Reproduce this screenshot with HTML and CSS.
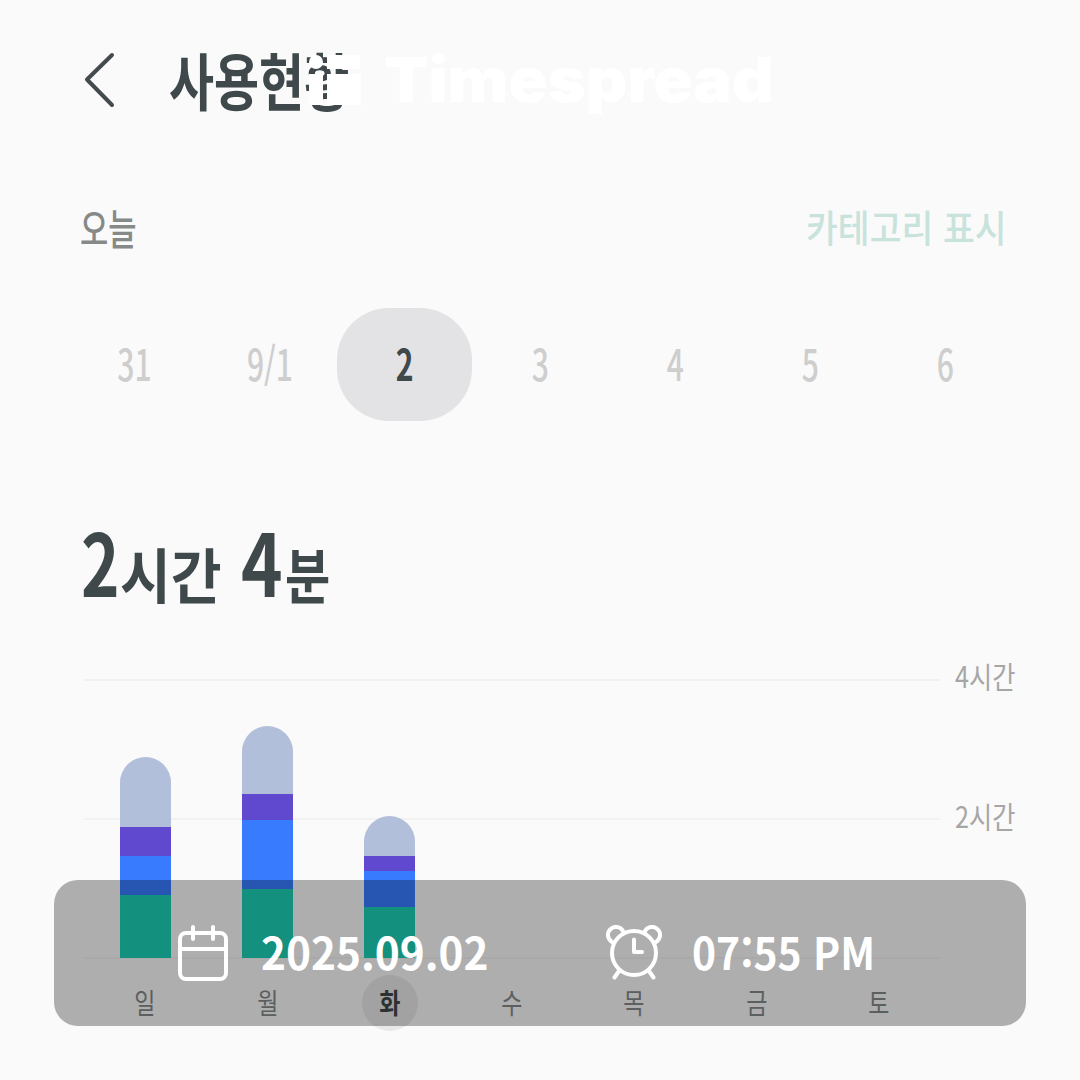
FILE: index.html
```html
<!DOCTYPE html>
<html lang="ko">
<head>
<meta charset="utf-8">
<title>사용현황</title>
<link rel="stylesheet" href="styles.css">
</head>
<body>
<main class="screen">
  <header class="header">
    <svg class="back" viewBox="0 0 32 56"><path d="M29 3 4 27.500 29 53"/></svg>
    <h1 class="title"><span>사용현황</span></h1>
  </header>
  <div class="filter">
    <div class="today"><span>오늘</span></div>
    <div class="category"><span>카테고리 표시</span></div>
  </div>
  <nav class="week">
    <div class="date"><span>31</span></div>
    <div class="date"><span>9/1</span></div>
    <div class="date selected"><span>2</span></div>
    <div class="date"><span>3</span></div>
    <div class="date"><span>4</span></div>
    <div class="date"><span>5</span></div>
    <div class="date"><span>6</span></div>
  </nav>
  <div class="total">
    <div class="num hours"><span>2</span></div>
    <div class="unit hour-unit"><span>시간</span></div>
    <div class="num minutes"><span>4</span></div>
    <div class="unit minute-unit"><span>분</span></div>
  </div>
  <section class="chart">
    <div class="plot">
      <div class="column"><div class="bar"><i class="other" style="height:70px"></i><i class="purple" style="height:29.500px"></i><i class="blue" style="height:38.500px"></i><i class="green" style="height:63.500px"></i></div></div>
      <div class="column"><div class="bar"><i class="other" style="height:67.500px"></i><i class="purple" style="height:26.500px"></i><i class="blue" style="height:68.500px"></i><i class="green" style="height:69.500px"></i></div></div>
      <div class="column"><div class="bar"><i class="other" style="height:40px"></i><i class="purple" style="height:15px"></i><i class="blue" style="height:35.500px"></i><i class="green" style="height:51.500px"></i></div></div>
    </div>
    <div class="scale">
      <div class="tick"><span>4시간</span></div>
      <div class="tick"><span>2시간</span></div>
    </div>
  </section>
  <div class="days">
    <div class="day"><span>일</span></div>
    <div class="day"><span>월</span></div>
    <div class="day active"><span>화</span></div>
    <div class="day"><span>수</span></div>
    <div class="day"><span>목</span></div>
    <div class="day"><span>금</span></div>
    <div class="day"><span>토</span></div>
  </div>
  <div class="brand">
    <svg class="mark" viewBox="0 0 54 52"><circle cx="8" cy="8" r="7"/><path d="M19 1H52V15H19ZM1 20H15V51H1ZM19 20H53V51H19Z"/></svg>
    <div class="wordmark"><span>Timespread</span></div>
  </div>
  <aside class="stamp">
    <svg class="calendar" viewBox="0 0 52 56"><rect x="2" y="8" width="46" height="46" rx="6"/><path d="M2 24H48M15 2V14M35 2V14"/></svg>
    <div class="stamp-date"><span>2025.09.02</span></div>
    <svg class="alarm" viewBox="0 0 58 56"><circle cx="29" cy="28" r="22"/><path d="M7 16.900A8 8 0 1 1 18.400 7M39.600 7A8 8 0 1 1 51 16.900M14 46 9.500 52.500M44 46 48.500 52.500M29 14.500V27H37"/></svg>
    <div class="stamp-time"><span>07:55 PM</span></div>
  </aside>
</main>
</body>
</html>
```

FILE: styles.css
```css
* { box-sizing: border-box; margin: 0; padding: 0; }
body { width: 1080px; height: 1080px; overflow: hidden; background: #fafafa; }
.screen {
  position: relative;
  display: flex;
  flex-direction: column;
  width: 1080px;
  height: 1080px;
  background: #fafafa;
  color: #3f484a;
  font-family: "Noto Sans CJK KR", sans-serif;
}
.screen span { display: inline-block; white-space: nowrap; transform-origin: left center; }
.header { display: flex; align-items: center; height: 160px; padding-left: 83px; }
.back { width: 32px; height: 56px; fill: none; stroke: #434b4d; stroke-width: 4; stroke-linecap: round; stroke-linejoin: round; }
.title { width: 180px; margin-left: 54px; padding-bottom: 3px; font-size: 62px; line-height: 62px; font-weight: 700; }
.title span { transform: scaleX(.79); }
.filter { display: flex; justify-content: space-between; align-items: center; height: 140px; padding: 0 74px 6px 80px; }
.today { width: 57px; color: #858a89; font-size: 42px; line-height: 42px; font-weight: 500; }
.today span { transform: scaleX(.73); }
.category { width: 200px; padding-bottom: 2px; color: #c8e3dc; font-size: 38px; line-height: 38px; font-weight: 500; }
.category span { transform: scaleX(.91); }
.week { display: grid; grid-template-columns: repeat(7, 135px); height: 113px; margin: 8px 67px 0; }
.date { display: flex; align-items: center; justify-content: center; padding: 0 0 5px 1px; border-radius: 52px; color: #cecece; font-size: 43px; font-weight: 500; line-height: 43px; }
.date span { transform: scaleX(.7); transform-origin: center; }
.date.selected { background: #e3e3e5; color: #3f484a; font-weight: 700; }
.total { display: flex; align-items: flex-end; height: 100px; margin-top: 82px; padding-left: 81px; font-weight: 700; }
.num { font-size: 86px; line-height: 86px; }
.num span { transform: scaleX(.76); }
.unit { font-size: 60px; line-height: 60px; font-weight: 700; }
.hours { width: 39px; }
.hour-unit { width: 121px; }
.hour-unit span { transform: scaleX(.92); }
.minutes { width: 44px; }
.minutes span { transform: scaleX(.82); }
.minute-unit span { transform: scaleX(.82); }
.chart { display: flex; height: 280px; margin-top: 76px; padding-left: 84px; }
.plot {
  display: grid;
  grid-template-columns: repeat(7, 1fr);
  width: 856px;
  background: linear-gradient(#f2f2f2, #f2f2f2) 0 0 / 100% 2px no-repeat,
    linear-gradient(#f2f2f2, #f2f2f2) 0 139px / 100% 2px no-repeat,
    linear-gradient(#f2f2f2, #f2f2f2) 0 278px / 100% 2px no-repeat;
}
.column { display: flex; align-items: flex-end; justify-content: center; padding-bottom: 1px; }
.bar { width: 51px; overflow: hidden; border-radius: 26px 26px 0 0; }
.bar i { display: block; }
.other { background: #b1bfda; }
.purple { background: #6049ce; }
.blue { background: #387bff; }
.green { background: #1ecfb5; }
.scale { display: flex; flex-direction: column; gap: 110px; margin: -19px 0 0 15px; }
.tick { width: 62px; color: #a6a6a6; font-size: 30px; line-height: 30px; }
.tick span { transform: scaleX(.84); }
.days { display: grid; grid-template-columns: repeat(7, 1fr); width: 856px; margin: 16px 0 0 84px; }
.day { display: flex; align-items: center; justify-content: center; justify-self: center; width: 56px; height: 56px; padding-bottom: 2px; color: #858989; font-size: 28px; line-height: 28px; }
.day span { transform: scaleX(.82); transform-origin: center; }
.day.active { border-radius: 50%; background: #e8e8e8; color: #3f484a; font-weight: 700; }
.brand { position: absolute; left: 308px; top: 54px; display: flex; align-items: center; height: 52px; color: #fff; }
.mark { width: 54px; height: 52px; fill: #fff; }
.wordmark { margin-left: 22px; font: 900 62px/62px Inter, sans-serif; }
.wordmark span { transform: scaleX(1.043); }
.stamp {
  position: absolute;
  left: 54px;
  top: 880px;
  display: flex;
  align-items: center;
  width: 972px;
  height: 146px;
  padding-left: 124px;
  border-radius: 24px;
  background: rgba(0, 0, 0, .3);
  color: #fff;
  font: 700 44px/44px "Noto Sans CJK KR", sans-serif;
}
.stamp svg { flex: none; fill: none; stroke: #fff; stroke-width: 4; stroke-linecap: round; stroke-linejoin: round; }
.calendar { width: 52px; height: 56px; }
.stamp-date { width: 228px; margin-left: 31px; padding-bottom: 4px; }
.alarm { width: 58px; height: 56px; margin-left: 116px; }
.stamp-time { margin-left: 29px; padding-bottom: 4px; }
.stamp-date span { transform: scaleX(.963); }
.stamp-time span { transform: scaleX(.928); }
```
